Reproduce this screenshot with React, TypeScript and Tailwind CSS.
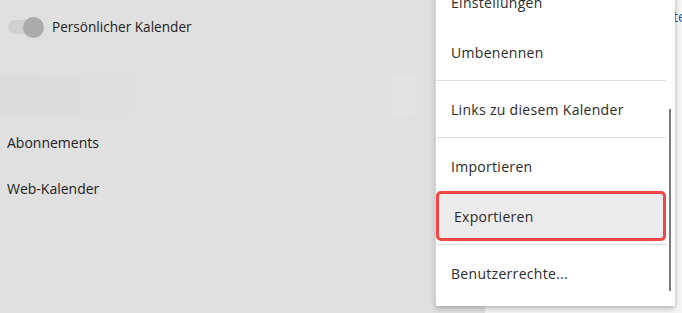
import React from "react";

// Calendar sidebar with an open context menu (page dimmed behind it).

const font = { fontFamily: "'Open Sans', 'Noto Sans', sans-serif" };

function MenuItem({ label, active }: { label: string; active?: boolean }) {
  return (
    <div
      className={
        "flex h-[50px] items-center pl-[15px] text-[14px] tracking-[0.3px] text-[#2b2b2b] " +
        (active ? "rounded-[5px] border-[3px] border-[#f54545] bg-[#ececec] pl-[12px]" : "")
      }
    >
      {label}
    </div>
  );
}

const Divider = () => <div className="my-[3px] h-px bg-[#dedede]" />;

export default function App() {
  return (
    <div style={font} className="relative flex h-[313px] w-[682px] overflow-hidden bg-[#e0e0e0]">
      {/* left panel */}
      <div className="w-[435px] shrink-0 bg-[#e0e0e0] shadow-[2px_0_3px_rgba(0,0,0,0.12)]">
        <div className="flex items-center gap-[8px] pl-[8px] pt-[17px]">
          <div className="relative h-[21px] w-[36px]">
            <div className="absolute left-0 top-[3px] h-[14px] w-[32px] rounded-full bg-[#d0d0d0]" />
            <div className="absolute right-0 top-0 h-[21px] w-[21px] rounded-full bg-[#ababab]" />
          </div>
          <span className="text-[13.6px] text-[#222]">Persönlicher Kalender</span>
        </div>
        <div className="mt-[36px] flex h-[43px]">
          <div className="w-[135px] bg-gradient-to-r from-[#dcdcdc] to-[#dfdfdf] blur-[1px]" />
          <div className="flex-1" />
          <div className="mr-[20px] w-[23px] bg-[#e3e3e3]" />
        </div>
        <div className="pl-[7px] text-[14px] text-[#222]">
          <div className="pt-[17px] leading-[18px]">Abonnements</div>
          <div className="pt-[28px] leading-[18px]">Web-Kalender</div>
        </div>
      </div>

      {/* main area behind menu */}
      <div className="flex flex-1 flex-col">
        <div className="flex-1 bg-[#f7f7f7] pl-[238px] pt-[6px] text-[14px] text-[#1d5fa8]">te</div>
        <div className="flex h-[10px]">
          <div className="w-[50px] bg-[#e0e0e0]" />
          <div className="flex-1 bg-[#f5f5f5]" />
        </div>
      </div>

      {/* context menu */}
      <div className="absolute left-[436px] top-[-23px] w-[239px] bg-white pb-[8px] shadow-[0_2px_6px_rgba(0,0,0,0.3)]">
        <div className="relative pr-[9px]">
          <MenuItem label="Einstellungen" />
          <MenuItem label="Umbenennen" />
          <Divider />
          <MenuItem label="Links zu diesem Kalender" />
          <Divider />
          <MenuItem label="Importieren" />
          <MenuItem label="Exportieren" active />
          <Divider />
          <MenuItem label="Benutzerrechte..." />
          <div className="absolute right-[4px] top-[132px] h-[182px] w-[2px] bg-[#7a7a7a]" />
        </div>
      </div>
    </div>
  );
}
